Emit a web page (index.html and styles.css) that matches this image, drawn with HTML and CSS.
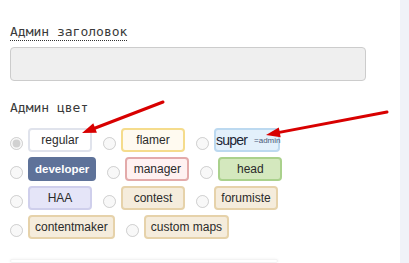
FILE: index.html
```html
<!DOCTYPE html>
<html>
<head>
<meta charset="utf-8">
<link rel="stylesheet" href="styles.css">
</head>
<body>
<div class="page">
  <main class="main">
    <div class="field">
      <span class="label dotted">Админ заголовок</span>
      <div class="input"></div>
    </div>
    <div class="field field-colors">
      <div class="label">Админ цвет</div>
      <div class="colors">
        <label class="item"><input type="radio" name="c" checked disabled><span class="chip c-regular">regular</span></label>
        <label class="item"><input type="radio" name="c" disabled><span class="chip c-flamer">flamer</span></label>
        <label class="item"><input type="radio" name="c" disabled><span class="chip c-super"><span class="super-name">super</span><small class="super-note">=admin</small></span></label>
        <label class="item"><input type="radio" name="c" disabled><span class="chip c-developer">developer</span></label>
        <label class="item"><input type="radio" name="c" disabled><span class="chip c-manager">manager</span></label>
        <label class="item"><input type="radio" name="c" disabled><span class="chip c-head">head</span></label>
        <label class="item"><input type="radio" name="c" disabled><span class="chip c-haa">HAA</span></label>
        <label class="item"><input type="radio" name="c" disabled><span class="chip c-beige">contest</span></label>
        <label class="item"><input type="radio" name="c" disabled><span class="chip c-beige">forumiste</span></label>
        <label class="item"><input type="radio" name="c" disabled><span class="chip c-beige">contentmaker</span></label>
        <label class="item"><input type="radio" name="c" disabled><span class="chip c-beige">custom maps</span></label>
      </div>
    </div>
    <div class="box"></div>
  </main>
  <aside class="rail"></aside>
  <svg class="arrows" width="409" height="263" viewBox="0 0 409 263">
    <line x1="163" y1="102" x2="94" y2="128.5" stroke="#d80000" stroke-width="3" stroke-linecap="round"/>
    <polygon points="82,133 96.9,132.7 93.3,123.3" fill="#d80000"/>
    <line x1="387" y1="112" x2="278" y2="132.6" stroke="#d80000" stroke-width="3" stroke-linecap="round"/>
    <polygon points="266,135 280.7,137.3 278.8,127.5" fill="#d80000"/>
  </svg>
</div>
</body>
</html>
```

FILE: styles.css
```css
html, body {
  margin: 0;
  padding: 0;
  background: #fff;
}

.page {
  position: relative;
  display: flex;
  width: 409px;
  height: 263px;
  overflow: hidden;
}

.main {
  flex: 1;
  padding: 24px 0 0 10px;
  display: flex;
  flex-direction: column;
  align-items: flex-start;
}

.rail {
  width: 9px;
  background: #f0f2f8;
}

.field {
  display: flex;
  flex-direction: column;
  align-items: flex-start;
}

.field-colors {
  margin-top: 19px;
}

.label {
  font-family: "DejaVu Sans Mono", "Liberation Mono", monospace;
  font-size: 13px;
  line-height: 16px;
  color: #3a3a3a;
}

.dotted {
  border-bottom: 1px dotted #333;
}

.input {
  margin-top: 6px;
  width: 356px;
  height: 34px;
  box-sizing: border-box;
  background: #efefef;
  border: 1px solid #cccccc;
  border-radius: 4px;
}

.colors {
  margin-top: 12px;
  width: 356px;
  display: flex;
  flex-wrap: wrap;
  column-gap: 11px;
  row-gap: 5px;
}

.item {
  display: flex;
  align-items: center;
  gap: 5px;
}

.item input {
  margin: 6px 0 0 0;
  width: 13px;
  height: 13px;
}

.chip {
  box-sizing: border-box;
  min-width: 64px;
  height: 24px;
  padding: 0 5px;
  border: 2px solid #dde0ea;
  border-radius: 4px;
  display: flex;
  align-items: center;
  justify-content: center;
  font-family: "Liberation Sans", Arial, sans-serif;
  font-size: 12px;
  color: #2a2a2a;
  white-space: nowrap;
}

.c-regular {
  background: #fff;
  border-color: #e0e3ec;
}

.c-flamer {
  background: #fffaf0;
  border-color: #f5dc8c;
}

.c-super {
  background: #e3f0fb;
  border-color: #bcd9f0;
  justify-content: flex-start;
  padding: 0;
  color: #1c2433;
}

.super-name {
  font-size: 14px;
  letter-spacing: -0.8px;
}

.super-note {
  margin-left: 7px;
  font-size: 8px;
  color: #4a5a78;
  margin-right: -3px;
}

.c-developer {
  background: #5e7299;
  border-color: #5e7299;
  color: #fff;
  font-weight: bold;
  font-size: 11.5px;
}

.c-manager {
  background: #fff1f1;
  border-color: #e3aaaa;
}

.c-head {
  background: #d4e8be;
  border-color: #aad18c;
}

.c-haa {
  background: #e5e5f8;
  border-color: #cfcfec;
}

.c-beige {
  background: #f5ecdc;
  border-color: #e6d2aa;
}

.box {
  margin-top: 20px;
  width: 266px;
  height: 40px;
  border-radius: 6px;
  background: #fff;
  box-shadow: 0 0 3px rgba(0, 0, 0, 0.06);
  border: 1px solid #f3f3f3;
}

.arrows {
  position: absolute;
  left: 0;
  top: 0;
  pointer-events: none;
}
```
